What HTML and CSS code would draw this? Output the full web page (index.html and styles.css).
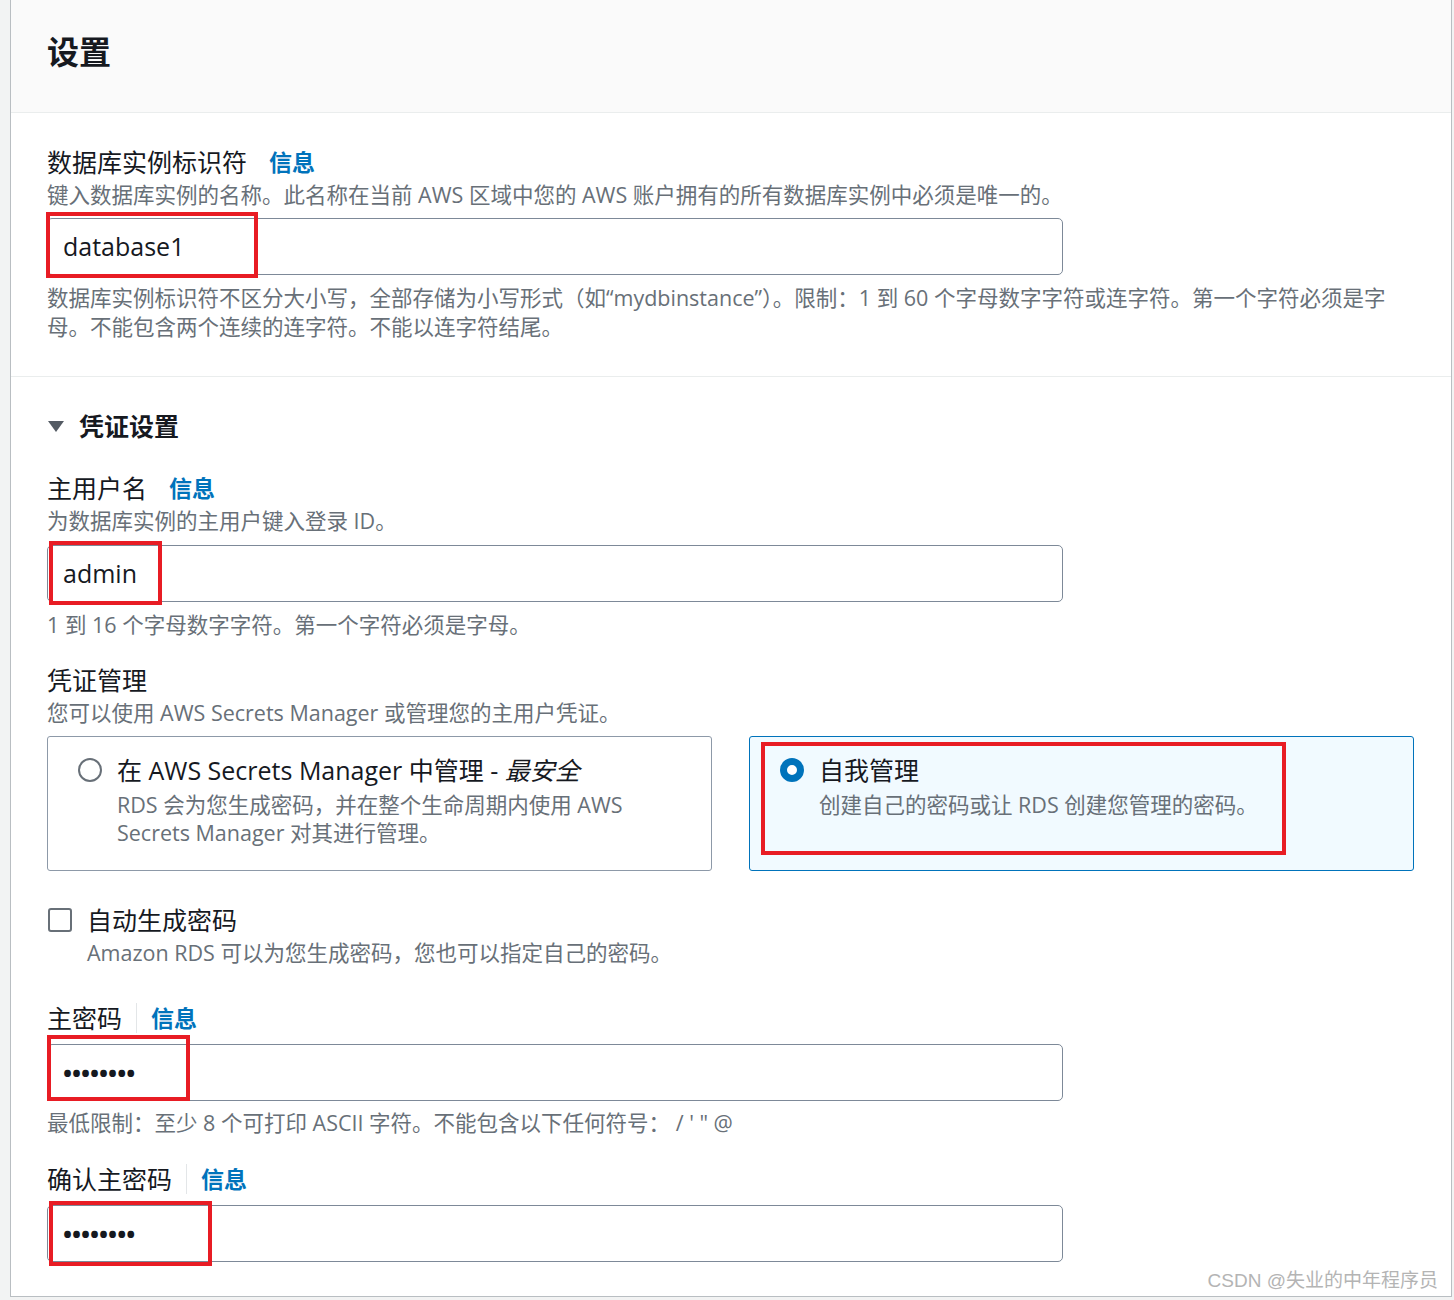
FILE: index.html
```html
<!DOCTYPE html>
<html lang="zh-CN">
<head>
    <meta charset="UTF-8">
    <meta name="viewport" content="width=device-width, initial-scale=1.0">
    <title>设置</title>
    <link rel="stylesheet" href="styles.css">
</head>
<body>
    <div class="panel">
        <header class="panel-header">
            <h2>设置</h2>
        </header>

        <section class="panel-section">
            <div class="field-label">数据库实例标识符 <a class="info" href="#">信息</a></div>
            <div class="field-desc">键入数据库实例的名称。此名称在当前 AWS 区域中您的 AWS 账户拥有的所有数据库实例中必须是唯一的。</div>
            <div class="input-wrap">
                <div class="input">database1</div>
                <span class="mark mark-db"></span>
            </div>
            <div class="constraint">数据库实例标识符不区分大小写，全部存储为小写形式（如“mydbinstance”）。限制：1 到 60 个字母数字字符或连字符。第一个字符必须是字母。不能包含两个连续的连字符。不能以连字符结尾。</div>
        </section>

        <section class="panel-section last">
            <div class="expander">
                <svg width="18" height="14" viewBox="0 0 18 14"><polygon points="1,2 17,2 9,13" fill="#545b64"/></svg>
                <span>凭证设置</span>
            </div>

            <div class="field-label gap-first">主用户名 <a class="info" href="#">信息</a></div>
            <div class="field-desc">为数据库实例的主用户键入登录 ID。</div>
            <div class="input-wrap">
                <div class="input">admin</div>
                <span class="mark mark-user"></span>
            </div>
            <div class="constraint">1 到 16 个字母数字字符。第一个字符必须是字母。</div>

            <div class="field-label gap-mid">凭证管理</div>
            <div class="field-desc">您可以使用 AWS Secrets Manager 或管理您的主用户凭证。</div>
            <div class="tiles">
                <div class="tile">
                    <span class="radio"></span>
                    <div>
                        <div class="tile-title">在 AWS Secrets Manager 中管理 - <em>最安全</em></div>
                        <div class="tile-desc">RDS 会为您生成密码，并在整个生命周期内使用 AWS Secrets Manager 对其进行管理。</div>
                    </div>
                </div>
                <div class="tile selected">
                    <span class="radio checked"></span>
                    <div>
                        <div class="tile-title">自我管理</div>
                        <div class="tile-desc">创建自己的密码或让 RDS 创建您管理的密码。</div>
                    </div>
                    <span class="mark mark-tile"></span>
                </div>
            </div>

            <div class="check-row">
                <span class="checkbox"></span>
                <div>
                    <div class="field-label">自动生成密码</div>
                    <div class="field-desc">Amazon RDS 可以为您生成密码，您也可以指定自己的密码。</div>
                </div>
            </div>

            <div class="field-label gap-pass">主密码<span class="sep"></span><a class="info" href="#">信息</a></div>
            <div class="input-wrap">
                <div class="input dots">••••••••</div>
                <span class="mark mark-pass"></span>
            </div>
            <div class="constraint tight">最低限制：至少 8 个可打印 ASCII 字符。不能包含以下任何符号： / ' " @</div>

            <div class="field-label gap-confirm">确认主密码<span class="sep"></span><a class="info" href="#">信息</a></div>
            <div class="input-wrap">
                <div class="input dots">••••••••</div>
                <span class="mark mark-confirm"></span>
            </div>
        </section>

        <div class="watermark">CSDN @失业的中年程序员</div>
    </div>
</body>
</html>
```

FILE: styles.css
```css
body {
    margin: 0;
    background: #f2f3f3;
    font-family: 'Open Sans', 'Noto Sans CJK SC', sans-serif;
    color: #16191f;
}

.panel {
    position: relative;
    margin-left: 10px;
    width: 1440px;
    background: #fff;
    border-left: 1px solid #b9bec2;
    border-right: 1px solid #b9bec2;
    border-bottom: 1px solid #b9bec2;
}

.panel-header {
    background: #fafafa;
    height: 113px;
    box-sizing: border-box;
    padding: 32px 36px 0;
    border-bottom: 1px solid #eaeded;
}

.panel-header h2 {
    margin: 0;
    font-size: 32px;
    line-height: 40px;
    font-weight: bold;
}

.panel-section {
    padding: 32px 37px 35px 36px;
    border-bottom: 1px solid #eaeded;
}

.panel-section.last {
    border-bottom: none;
    padding-top: 31px;
    padding-bottom: 34px;
}

.field-label {
    font-size: 25px;
    line-height: 34px;
    display: flex;
    align-items: center;
}

.info {
    margin-left: 22px;
    color: #0073bb;
    font-weight: bold;
    font-size: 23px;
    text-decoration: none;
}

.sep {
    display: inline-block;
    width: 1px;
    height: 30px;
    background: #e3e6e8;
    margin-left: 14px;
}

.sep + .info {
    margin-left: 14px;
}

.field-desc {
    font-size: 21.5px;
    line-height: 31px;
    color: #687078;
}

.input-wrap {
    position: relative;
    width: 1016px;
    margin-top: 8px;
}

.input {
    height: 57px;
    box-sizing: border-box;
    border: 1px solid #7d8998;
    border-radius: 5px;
    padding: 0 15px;
    font-size: 25px;
    line-height: 55px;
}

.input.dots {
    font-size: 24px;
    font-weight: bold;
}

.constraint {
    margin-top: 8px;
    font-size: 21.5px;
    line-height: 29px;
    color: #687078;
}

.constraint.tight {
    margin-top: 7px;
}

.mark {
    position: absolute;
    border: 4px solid #e81c24;
    box-sizing: border-box;
    pointer-events: none;
}

.mark-db { left: -1px; top: -6px; width: 212px; height: 66px; }
.mark-user { left: 2px; top: -4px; width: 113px; height: 64px; }
.mark-tile { left: 11px; top: 5px; width: 525px; height: 113px; }
.mark-pass { left: 0; top: -9px; width: 143px; height: 66px; }
.mark-confirm { left: 2px; top: -4px; width: 163px; height: 65px; }

.expander {
    display: flex;
    align-items: center;
    gap: 14px;
    font-size: 25px;
    line-height: 36px;
    font-weight: bold;
}

.gap-first { margin-top: 27px; }
.gap-first ~ .input-wrap { margin-top: 9px; }
.gap-mid { margin-top: 24px; }
.gap-pass { margin-top: 33px; }
.gap-confirm { margin-top: 25px; }
.gap-pass + .input-wrap,
.gap-confirm + .input-wrap { margin-top: 9px; }

.tiles {
    display: grid;
    grid-template-columns: 1fr 1fr;
    gap: 37px;
    margin-top: 8px;
}

.tile {
    position: relative;
    height: 135px;
    box-sizing: border-box;
    border: 1px solid #8d99a8;
    border-radius: 3px;
    padding: 16px 24px 0 30px;
    display: flex;
    gap: 15px;
}

.tile.selected {
    background: #f1faff;
    border-color: #0073bb;
}

.tile-title {
    font-size: 25px;
    line-height: 34px;
}

.tile-title em {
    font-style: italic;
}

.tile-desc {
    margin-top: 4px;
    font-size: 21.5px;
    line-height: 28px;
    color: #687078;
}

.radio {
    flex: none;
    width: 24px;
    height: 24px;
    box-sizing: border-box;
    border: 2px solid #687078;
    border-radius: 50%;
    background: #fff;
    margin-top: 5px;
}

.radio.checked {
    border: 7px solid #0073bb;
}

.check-row {
    display: flex;
    gap: 15px;
    margin-top: 32px;
}

.checkbox {
    flex: none;
    width: 24px;
    height: 24px;
    box-sizing: border-box;
    border: 2px solid #687078;
    border-radius: 3px;
    margin-top: 5px;
    margin-left: 1px;
}

.watermark {
    position: absolute;
    right: 13px;
    bottom: 4px;
    font-family: 'Liberation Sans', 'Noto Sans CJK SC', sans-serif;
    font-size: 19px;
    color: #b4b4b4;
}
```
